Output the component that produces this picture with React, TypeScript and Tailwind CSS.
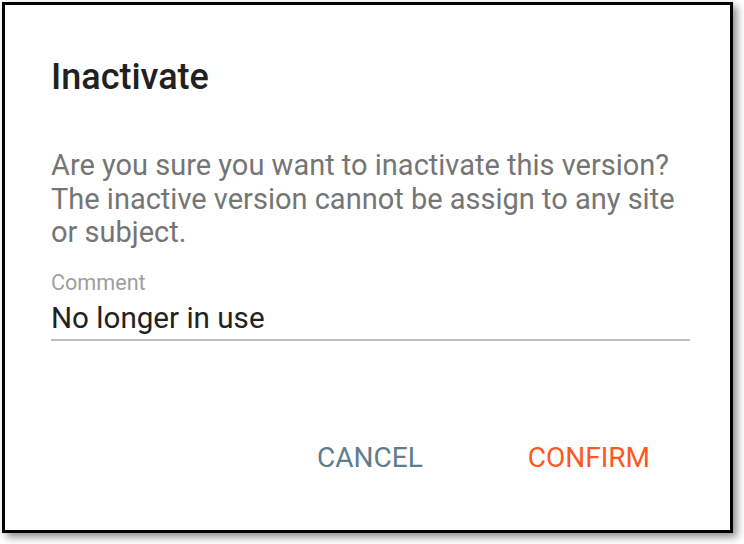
export default function App() {
  return (
    <div className="h-[544px] w-[744px] bg-white p-[2px] font-['Roboto',sans-serif]">
      <div className="h-[531px] w-[731px] border-[3px] border-black bg-white shadow-[4px_4px_8px_rgba(0,0,0,0.45)]">
        <div className="flex h-full flex-col pl-[46px] pr-[40px] pt-[52px]">
          <h1 className="text-[36px] font-medium leading-[40px] text-[#212121]">Inactivate</h1>
          <p className="mt-[52px] text-[29px] leading-[33.5px] text-[#757575]">
            Are you sure you want to inactivate this version? The inactive version cannot be assign to any site or subject.
          </p>
          <div className="mt-[20px] border-b-2 border-[#bdbdbd] pb-[4px]">
            <div className="text-[21.6px] leading-[26px] text-[#9e9e9e]">Comment</div>
            <div className="mt-[5px] text-[29.6px] leading-[34px] text-[#212121]">No longer in use</div>
          </div>
          <div className="mt-auto mb-[55px] flex justify-end gap-[105px] pr-[40px]">
            <button className="text-[28px] leading-[34px] uppercase text-[#607d8b]">Cancel</button>
            <button className="text-[28px] leading-[34px] uppercase text-[#ff5722]">Confirm</button>
          </div>
        </div>
      </div>
    </div>
  );
}
